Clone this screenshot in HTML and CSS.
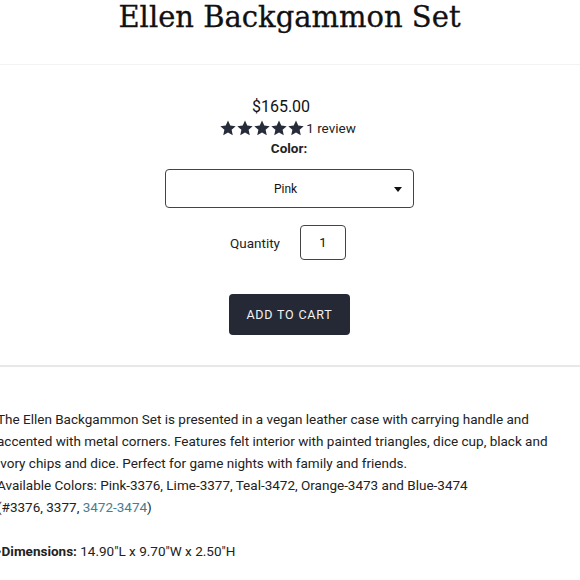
FILE: index.html
```html
<!DOCTYPE html>
<html lang="en">
<head>
<meta charset="utf-8">
<title>Ellen Backgammon Set</title>
<link rel="stylesheet" href="styles.css">
</head>
<body>
<main class="page">
  <header class="title-bar">
    <h1 class="title">Ellen Backgammon Set</h1>
  </header>
  <section class="buy">
    <div class="price">$165.00</div>
    <div class="rating">
      <span class="stars">
        <svg viewBox="1.6 1.8 20.8 20"><path d="M12 2.2l2.95 6.5 7.05.75-5.3 4.75 1.5 6.95L12 17.6l-6.2 3.55 1.5-6.950L2 9.45l7.05-.75z"/></svg>
        <svg viewBox="1.6 1.8 20.8 20"><path d="M12 2.2l2.95 6.5 7.05.75-5.3 4.75 1.5 6.95L12 17.6l-6.2 3.55 1.5-6.95L2 9.45l7.05-.75z"/></svg>
        <svg viewBox="1.6 1.8 20.8 20"><path d="M12 2.2l2.95 6.5 7.05.75-5.3 4.75 1.5 6.95L12 17.6l-6.2 3.55 1.5-6.95L2 9.45l7.05-.75z"/></svg>
        <svg viewBox="1.6 1.8 20.8 20"><path d="M12 2.2l2.95 6.5 7.05.75-5.3 4.75 1.5 6.95L12 17.6l-6.2 3.55 1.5-6.95L2 9.45l7.05-.75z"/></svg>
        <svg viewBox="1.6 1.8 20.8 20"><path d="M12 2.2l2.95 6.5 7.05.75-5.3 4.75 1.5 6.95L12 17.6l-6.2 3.55 1.5-6.95L2 9.45l7.05-.75z"/></svg>
      </span>
      <span class="reviews">1 review</span>
    </div>
    <div class="color-label">Color:</div>
    <div class="select">
      <span class="select-value">Pink</span>
      <svg class="caret" viewBox="0 0 10 6"><path d="M0 0h10L5 6z"/></svg>
    </div>
    <div class="qty">
      <span class="qty-label">Quantity</span>
      <span class="qty-input">1</span>
    </div>
    <button class="cart">ADD TO CART</button>
  </section>
  <section class="desc">
    <p>The Ellen Backgammon Set is presented in a vegan leather case with carrying handle and accented with metal corners. Features felt interior with painted triangles, dice cup, black and ivory chips and dice. Perfect for game nights with family and friends.<br>Available Colors: Pink-3376, Lime-3377, Teal-3472, Orange-3473 and Blue-3474<br>(#3376, 3377, <a href="#">3472-3474</a>)</p>
    <p class="dims"><span class="bullet">•</span><b>Dimensions:</b> 14.90"L x 9.70"W x 2.50"H</p>
  </section>
</main>
</body>
</html>
```

FILE: styles.css
```css
html, body {
  margin: 0;
  padding: 0;
  background: #fff;
  overflow: hidden;
}
body {
  font-family: Roboto, "Liberation Sans", sans-serif;
  color: #222;
}
.page {
  margin: 0 -2px 0 -3px;
}
.title-bar {
  border-bottom: 1px solid #f3f3f3;
  height: 64px;
  overflow: hidden;
}
.title {
  margin: -8px 0 0;
  font-family: "DejaVu Serif", serif;
  font-weight: normal;
  font-size: 29px;
  line-height: 50px;
  text-align: center;
  color: #111;
  -webkit-text-stroke: 0.3px #111;
}
.buy {
  display: flex;
  flex-direction: column;
  align-items: center;
  padding-top: 32px;
  height: 268px;
  border-bottom: 2px solid #e8e8e8;
  box-sizing: content-box;
}
.price {
  font-size: 16px;
  line-height: 20px;
  color: #111;
  margin-left: -17px;
}
.rating {
  display: flex;
  align-items: center;
  margin-top: 1px;
  margin-left: -3px;
  height: 20px;
}
.stars {
  display: flex;
  gap: 1px;
}
.stars svg {
  width: 16px;
  height: 16px;
  fill: #272c3a;
}
.reviews {
  font-size: 13.5px;
  color: #222;
  margin-left: 2px;
}
.color-label {
  font-weight: bold;
  font-size: 13.5px;
  line-height: 20px;
  margin-left: -1px;
}
.select {
  margin-top: 11px;
  width: 249px;
  height: 39px;
  box-sizing: border-box;
  border: 1px solid #444;
  border-radius: 4px;
  display: flex;
  align-items: center;
  justify-content: center;
  position: relative;
}
.select-value {
  font-size: 12px;
  color: #111;
  margin-left: -8px;
}
.caret {
  position: absolute;
  right: 11px;
  top: 17px;
  width: 8px;
  height: 5px;
  fill: #111;
}
.qty {
  display: flex;
  align-items: center;
  margin-top: 17px;
  gap: 20px;
  margin-left: -3px;
}
.qty-label {
  font-size: 13.5px;
  color: #222;
}
.qty-input {
  width: 46px;
  height: 35px;
  box-sizing: border-box;
  border: 1px solid #444;
  border-radius: 4px;
  display: flex;
  align-items: center;
  justify-content: center;
  font-size: 13px;
  color: #111;
}
.cart {
  margin-top: 34px;
  width: 121px;
  height: 41px;
  background: #242935;
  color: #f2f2f2;
  border: none;
  border-radius: 4px;
  font-family: Roboto, "Liberation Sans", sans-serif;
  font-size: 12.5px;
  letter-spacing: 0.8px;
  padding: 0;
}
.desc {
  padding: 41px 22px 0 0;
  font-size: 13.5px;
  line-height: 22px;
  color: #222;
}
.desc p {
  margin: 0;
}
.desc a {
  color: #4b7c8d;
  text-decoration: none;
}
.dims {
  margin-top: 22px !important;
}
.dims b {
  font-weight: bold;
}
```
